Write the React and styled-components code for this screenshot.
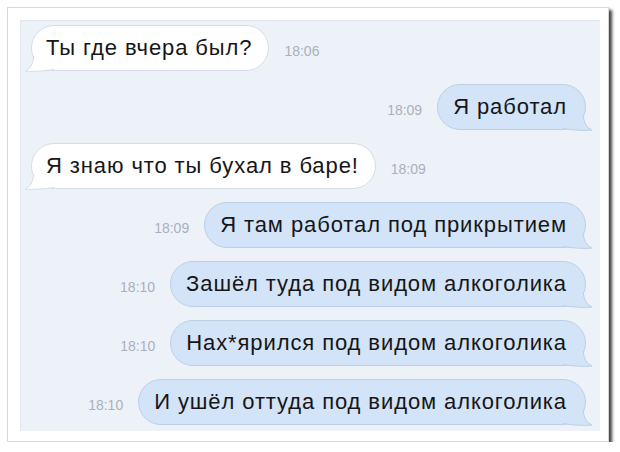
import styled, { createGlobalStyle } from "styled-components";

const GlobalStyle = createGlobalStyle`
  html, body {
    margin: 0;
    padding: 0;
    background: #ffffff;
  }
  body {
    font-family: "Liberation Sans", Arial, sans-serif;
  }
`;

const messages = [
  { id: 1, text: "Ты где вчера был?", time: "18:06", out: false },
  { id: 2, text: "Я работал", time: "18:09", out: true },
  { id: 3, text: "Я знаю что ты бухал в баре!", time: "18:09", out: false },
  { id: 4, text: "Я там работал под прикрытием", time: "18:09", out: true },
  { id: 5, text: "Зашёл туда под видом алкоголика", time: "18:10", out: true },
  { id: 6, text: "Нах*ярился под видом алкоголика", time: "18:10", out: true },
  { id: 7, text: "И ушёл оттуда под видом алкоголика", time: "18:10", out: true },
];

function Tail({ out }) {
  const fill = out ? "#d3e3f8" : "#ffffff";
  const stroke = out ? "#bccfe6" : "#d6dce4";
  return (
    <TailSvg $out={out} width="30" height="24" viewBox="0 0 30 24">
      <path d="M20.2 8 Q21 20 29 23 C24 24 8 23 0 22 L0 8 Z" fill={fill} />
      <path d="M20.2 8 Q21 20 29 23 C24 24 8 23 0 21.5" fill="none" stroke={stroke} strokeWidth="1" />
    </TailSvg>
  );
}

function App() {
  return (
    <>
      <GlobalStyle />
      <Frame>
        <Chat>
          {messages.map((m) => (
            <Row key={m.id} $out={m.out}>
              {m.out && <Time>{m.time}</Time>}
              <Bubble $out={m.out}>
                <Tail out={m.out} />
                <BubbleText>{m.text}</BubbleText>
              </Bubble>
              {!m.out && <Time>{m.time}</Time>}
            </Row>
          ))}
        </Chat>
      </Frame>
    </>
  );
}

export default App;

const Frame = styled.div`
  box-sizing: border-box;
  width: 602px;
  height: 435px;
  margin: 7px 0 0 7px;
  padding: 12px 8px 10px 12px;
  display: flex;
  background: #ffffff;
  border: 1px solid #d8d8d8;
  box-shadow: 3px 3px 3px rgba(0, 0, 0, 0.75);
`;

const Chat = styled.div`
  flex: 1;
  display: flex;
  flex-direction: column;
  gap: 13px;
  padding: 5px 14px 5px 11px;
  background: #edf2f9;
  box-shadow: inset 1px 1px 1px #e0e5ec;
`;

const Row = styled.div`
  display: flex;
  justify-content: ${(p) => (p.$out ? "flex-end" : "flex-start")};
  gap: 15px;
`;

const Bubble = styled.div`
  position: relative;
  box-sizing: border-box;
  height: 46px;
  display: flex;
  align-items: center;
  padding: ${(p) => (p.$out ? "0 18px 0 15px" : "0 16px 0 14px")};
  border-radius: 23px;
  background: ${(p) => (p.$out ? "#d3e3f8" : "#ffffff")};
  border: 1px solid ${(p) => (p.$out ? "#bccfe6" : "#d6dce4")};
`;

const TailSvg = styled.svg`
  position: absolute;
  bottom: -2px;
  ${(p) => (p.$out ? "right: -8px;" : "left: -8px; transform: scaleX(-1);")}
`;

const BubbleText = styled.span`
  position: relative;
  font-size: 22px;
  letter-spacing: 0.9px;
  color: #161616;
  white-space: nowrap;
`;

const Time = styled.span`
  align-self: flex-end;
  margin-bottom: 12px;
  font-size: 14px;
  color: #a9b0ba;
`;
